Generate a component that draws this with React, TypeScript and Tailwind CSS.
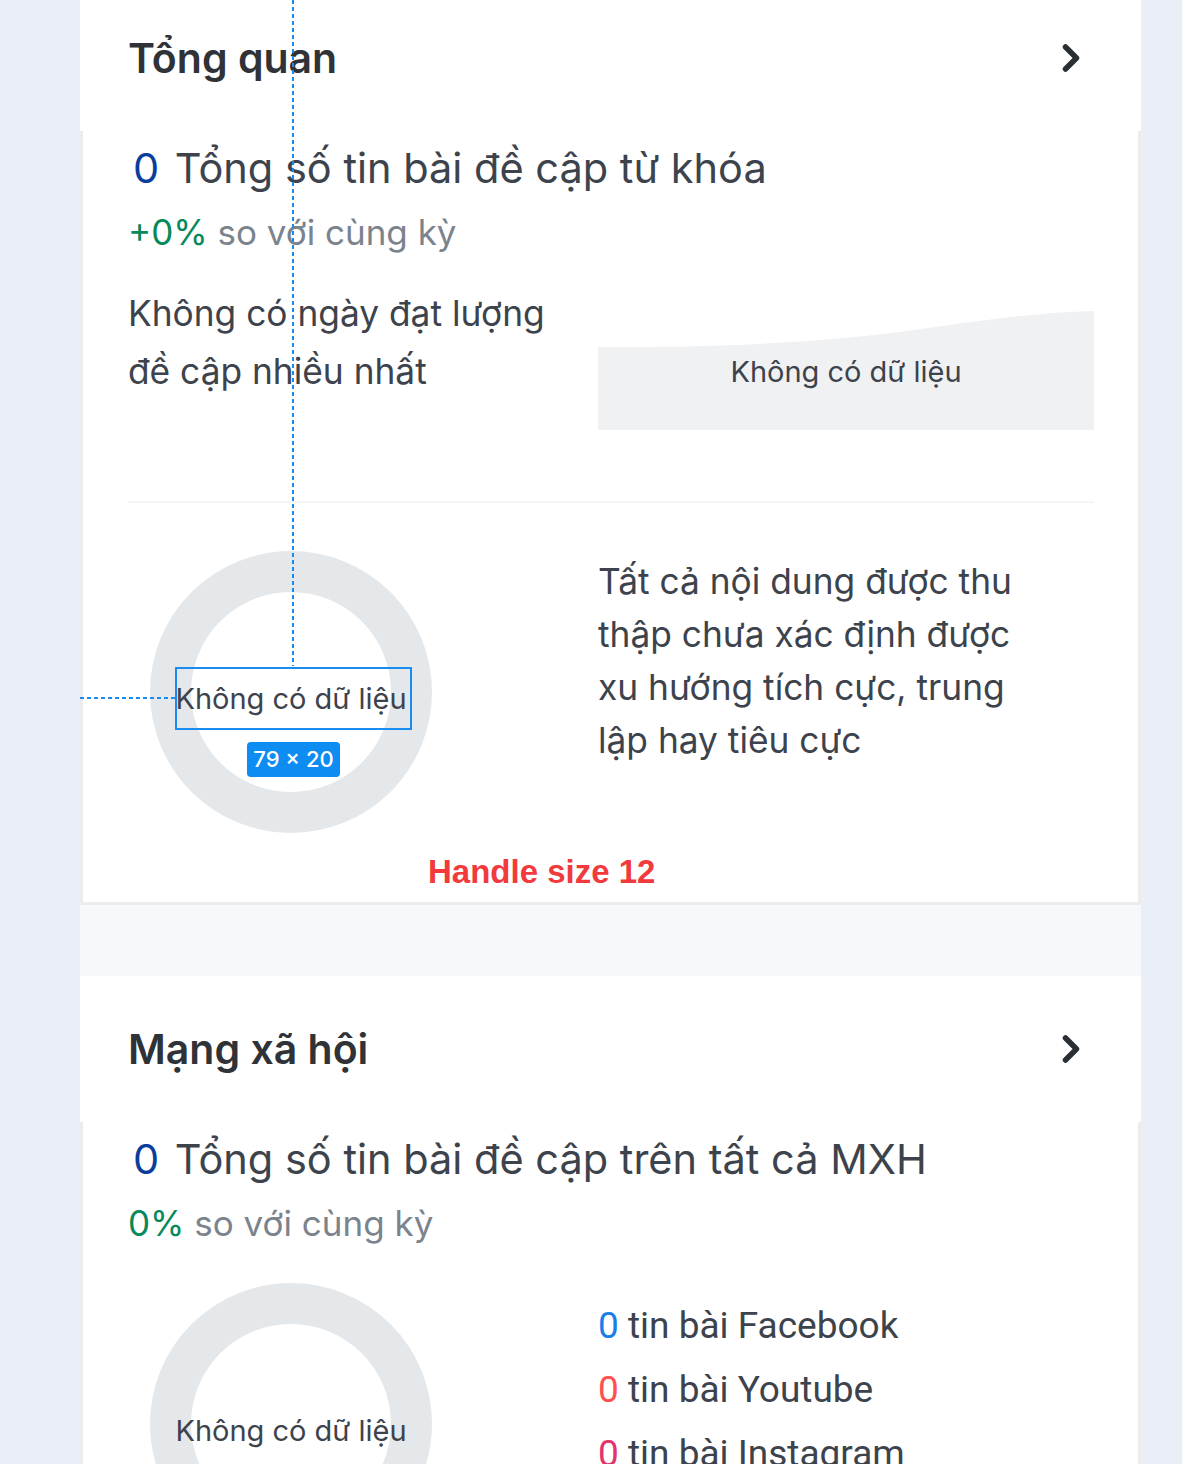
import { ChevronRight } from "lucide-react";

function CardHeader({ title, first }: { title: string; first?: boolean }) {
    return (
        <header
            className={
                "bg-white flex items-center justify-between pl-[48px] pr-[48px] " +
                (first ? "h-[131px] pb-[15px]" : "h-[146px]")
            }
        >
            <h2 className="text-[41px] leading-[52px] font-semibold text-[#2f3237]">{title}</h2>
            <ChevronRight size={44} strokeWidth={3} className="text-[#2a2e35]" />
        </header>
    );
}

function Donut() {
    return (
        <div className="ml-[22px] w-[282px] h-[282px] rounded-full border-[41px] border-[#e5e8eb] flex items-center justify-center">
            <span className="mt-[14px] whitespace-nowrap text-[29px] leading-[40px] text-[#3d434c]">
                Không có dữ liệu
            </span>
        </div>
    );
}

function Summary({ label, delta }: { label: string; delta: string }) {
    return (
        <>
            <p className="pt-[9px] text-[41.5px] leading-[56px] text-[#3d434c]">
                <span className="ml-[5px] mr-[4px] text-[#0b3d9c]">0</span> {label}
            </p>
            <p className="mt-[12px] text-[35px] leading-[48px] text-[#7b838d]">
                <span className="text-[#08895a]">{delta}</span> so với cùng kỳ
            </p>
        </>
    );
}

export default function App() {
    return (
        <div className="relative h-[1464px] overflow-hidden bg-[#eaeff7] font-['Inter','Noto_Sans',sans-serif]">
            <div className="ml-[80px] w-[1061px]">
                {/* Tổng quan */}
                <CardHeader title="Tổng quan" first />
                <div className="bg-white border-x-[3px] border-b-[3px] border-[#ececec] pl-[45px] pr-[44px] pb-[69px]">
                    <Summary label="Tổng số tin bài đề cập từ khóa" delta="+0%" />

                    <div className="mt-[29px] grid grid-cols-[470px_1fr]">
                        <p className="max-w-[440px] text-[35.3px] leading-[58px] text-[#3d434c]">
                            Không có ngày đạt lượng đề cập nhiều nhất
                        </p>
                        <div className="relative mt-[25px] h-[120px] flex items-center justify-center">
                            <svg className="absolute inset-0 w-full h-full" viewBox="0 0 496 120" preserveAspectRatio="none">
                                <path d="M0 37 C 120 37 220 34 330 18 C 400 8 450 2 496 1 L 496 120 L 0 120 Z" fill="#f0f1f3" />
                            </svg>
                            <span className="relative mt-[4px] text-[29px] leading-[40px] text-[#3d434c]">Không có dữ liệu</span>
                        </div>
                    </div>

                    <div className="mt-[71px] h-[2px] bg-[#f4f5f7]" />

                    <div className="mt-[48px] grid grid-cols-[470px_1fr]">
                        <Donut />
                        <p className="mt-[4px] max-w-[440px] text-[35.3px] leading-[53px] text-[#3d434c]">
                            Tất cả nội dung được thu thập chưa xác định được xu hướng tích cực, trung lập hay tiêu cực
                        </p>
                    </div>
                </div>

                <div className="h-[71px] bg-[#f7f8fa]" />

                {/* Mạng xã hội */}
                <CardHeader title="Mạng xã hội" />
                <div className="bg-white border-x-[3px] border-b-[3px] border-[#ececec] pl-[45px] pr-[44px] pb-[69px]">
                    <Summary label="Tổng số tin bài đề cập trên tất cả MXH" delta="0%" />

                    <div className="mt-[36px] grid grid-cols-[470px_1fr]">
                        <Donut />
                        <ul className="mt-[11px] font-['Roboto',sans-serif] text-[37px] leading-[64px] text-[#3d434c]">
                            <li><span className="text-[#1a7ee8]">0</span> tin bài Facebook</li>
                            <li><span className="text-[#ff4f4f]">0</span> tin bài Youtube</li>
                            <li><span className="text-[#e2336b]">0</span> tin bài Instagram</li>
                        </ul>
                    </div>
                </div>
            </div>

            {/* inspector overlay */}
            <div className="absolute left-[292px] top-0 w-[2px] h-[666px] bg-[repeating-linear-gradient(to_bottom,#1a8cf0_0_4px,transparent_4px_7px)]" />
            <div className="absolute left-[80px] top-[697px] w-[95px] h-[2px] bg-[repeating-linear-gradient(to_right,#1a8cf0_0_4px,transparent_4px_7px)]" />
            <div className="absolute left-[175px] top-[667px] w-[237px] h-[63px] border-2 border-[#1a8cf0]" />
            <div className="absolute left-[247px] top-[742px] w-[93px] h-[35px] rounded-[4px] bg-[#0d8cf2] flex items-center justify-center text-[22px] font-medium text-white">
                79 × 20
            </div>
            <div className="absolute left-[428px] top-[853px] font-['Liberation_Sans',Arial,sans-serif] font-bold text-[33px] leading-[38px] text-[#f23a3c]">
                Handle size 12
            </div>
        </div>
    );
}
